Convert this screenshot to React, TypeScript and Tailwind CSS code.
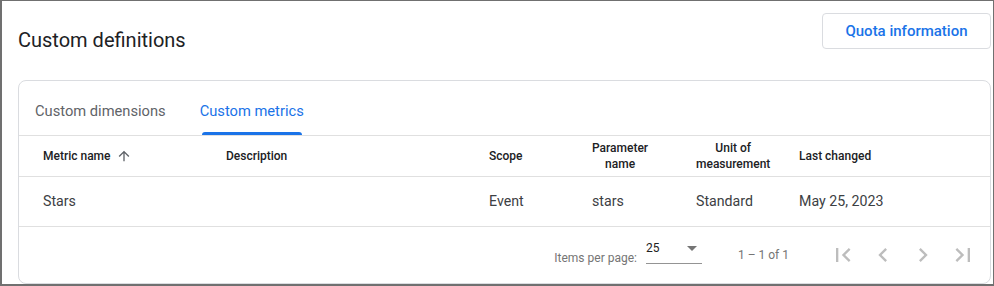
import React from 'react';

const FirstIcon = () => (
  <svg viewBox="0 0 24 24" className="w-[28px] h-[28px] fill-[#bdbdbd]">
    <path d="M18.41 16.59L13.82 12l4.59-4.59L17 6l-6 6 6 6zM6 6h2v12H6z" />
  </svg>
);
const PrevIcon = () => (
  <svg viewBox="0 0 24 24" className="w-[28px] h-[28px] fill-[#bdbdbd]">
    <path d="M15.41 7.41L14 6l-6 6 6 6 1.41-1.41L10.83 12z" />
  </svg>
);
const NextIcon = () => (
  <svg viewBox="0 0 24 24" className="w-[28px] h-[28px] fill-[#bdbdbd]">
    <path d="M10 6L8.59 7.41 13.17 12l-4.58 4.59L10 18l6-6z" />
  </svg>
);
const LastIcon = () => (
  <svg viewBox="0 0 24 24" className="w-[28px] h-[28px] fill-[#bdbdbd]">
    <path d="M5.59 7.41L10.18 12l-4.59 4.59L7 18l6-6-6-6zM16 6h2v12h-2z" />
  </svg>
);

const rows = [
  { name: 'Stars', description: '', scope: 'Event', param: 'stars', unit: 'Standard', changed: 'May 25, 2023' },
];

export default function App() {
  return (
    <div className="w-[994px] h-[286px] bg-white border-t border-r border-l-2 border-b-2 border-[#707070] font-['Roboto','Liberation_Sans',sans-serif] overflow-hidden">
      <div className="flex items-start justify-between pl-[16px] pr-[2px] pt-[12px]">
        <h1 className="mt-[13px] text-[20px] leading-[28px] text-[#202124]">Custom definitions</h1>
        <button className="w-[169px] h-[36px] rounded-[4px] border border-[#dadce0] bg-white text-[15px] font-medium text-[#1a73e8]">
          Quota information
        </button>
      </div>

      <div className="mt-[26px] ml-[16px] mr-[2px] h-[204px] rounded-[8px] border border-[#dadce0] overflow-hidden">
        {/* tabs */}
        <div className="flex border-b border-[#e0e0e0]">
          <div className="flex flex-col h-[54px] px-[16px] pt-[20px]">
            <span className="text-[14.7px] leading-[20px] text-[#5f6368]">Custom dimensions</span>
          </div>
          <div className="flex flex-col h-[54px] px-[16px] pt-[20px] ml-[2px]">
            <span className="text-[14.7px] leading-[20px] text-[#1a73e8]">Custom metrics</span>
            <div className="flex-1" />
            <div className="h-[3px] mx-[2px] rounded-t-[3px] bg-[#1a73e8]" />
          </div>
        </div>

        {/* header */}
        <div className="grid grid-cols-[183px_263px_103px_104px_103px_1fr] items-center h-[41px] pl-[24px] border-b border-[#e0e0e0] text-[12px] leading-[16px] font-medium text-[#202124]">
          <div className="flex items-center">
            <span>Metric name</span>
            <svg viewBox="0 0 24 24" className="ml-[5px] w-[16px] h-[16px] fill-[#5f6368]">
              <path d="M4 12l1.41 1.41L11 7.83V20h2V7.83l5.58 5.59L20 12l-8-8-8 8z" />
            </svg>
          </div>
          <div>Description</div>
          <div>Scope</div>
          <div>
            <div className="inline-block text-center">Parameter<br />name</div>
          </div>
          <div>
            <div className="inline-block text-center">Unit of<br />measurement</div>
          </div>
          <div>Last changed</div>
        </div>

        {/* rows */}
        {rows.map((r) => (
          <div
            key={r.name}
            className="grid grid-cols-[183px_263px_103px_104px_103px_1fr] items-center h-[50px] pl-[24px] border-b border-[#e0e0e0] text-[14.2px] text-[#3c4043]"
          >
            <div>{r.name}</div>
            <div>{r.description}</div>
            <div>{r.scope}</div>
            <div>{r.param}</div>
            <div>{r.unit}</div>
            <div>{r.changed}</div>
          </div>
        ))}

        {/* paginator */}
        <div className="flex items-start justify-end h-[56px] pr-[7px] text-[12px] leading-[16px] text-[#757575]">
          <span className="mt-[23px] mr-[9px]">Items per page:</span>
          <div className="mt-[13px] mr-[36px] w-[56px] flex flex-col">
            <div className="flex items-center justify-between h-[16px] pb-[7px] box-content border-b border-[#949494]">
              <span className="text-[#212121]">25</span>
              <span className="mr-[5px] w-0 h-0 border-l-[5px] border-r-[5px] border-t-[5px] border-l-transparent border-r-transparent border-t-[#757575]" />
            </div>
          </div>
          <span className="mt-[20px] mr-[34px]">1 – 1 of 1</span>
          <div className="mt-[8px] flex">
            <button className="w-[40px] h-[40px] flex items-center justify-center"><FirstIcon /></button>
            <button className="w-[40px] h-[40px] flex items-center justify-center"><PrevIcon /></button>
            <button className="w-[40px] h-[40px] flex items-center justify-center"><NextIcon /></button>
            <button className="w-[40px] h-[40px] flex items-center justify-center"><LastIcon /></button>
          </div>
        </div>
      </div>
    </div>
  );
}
